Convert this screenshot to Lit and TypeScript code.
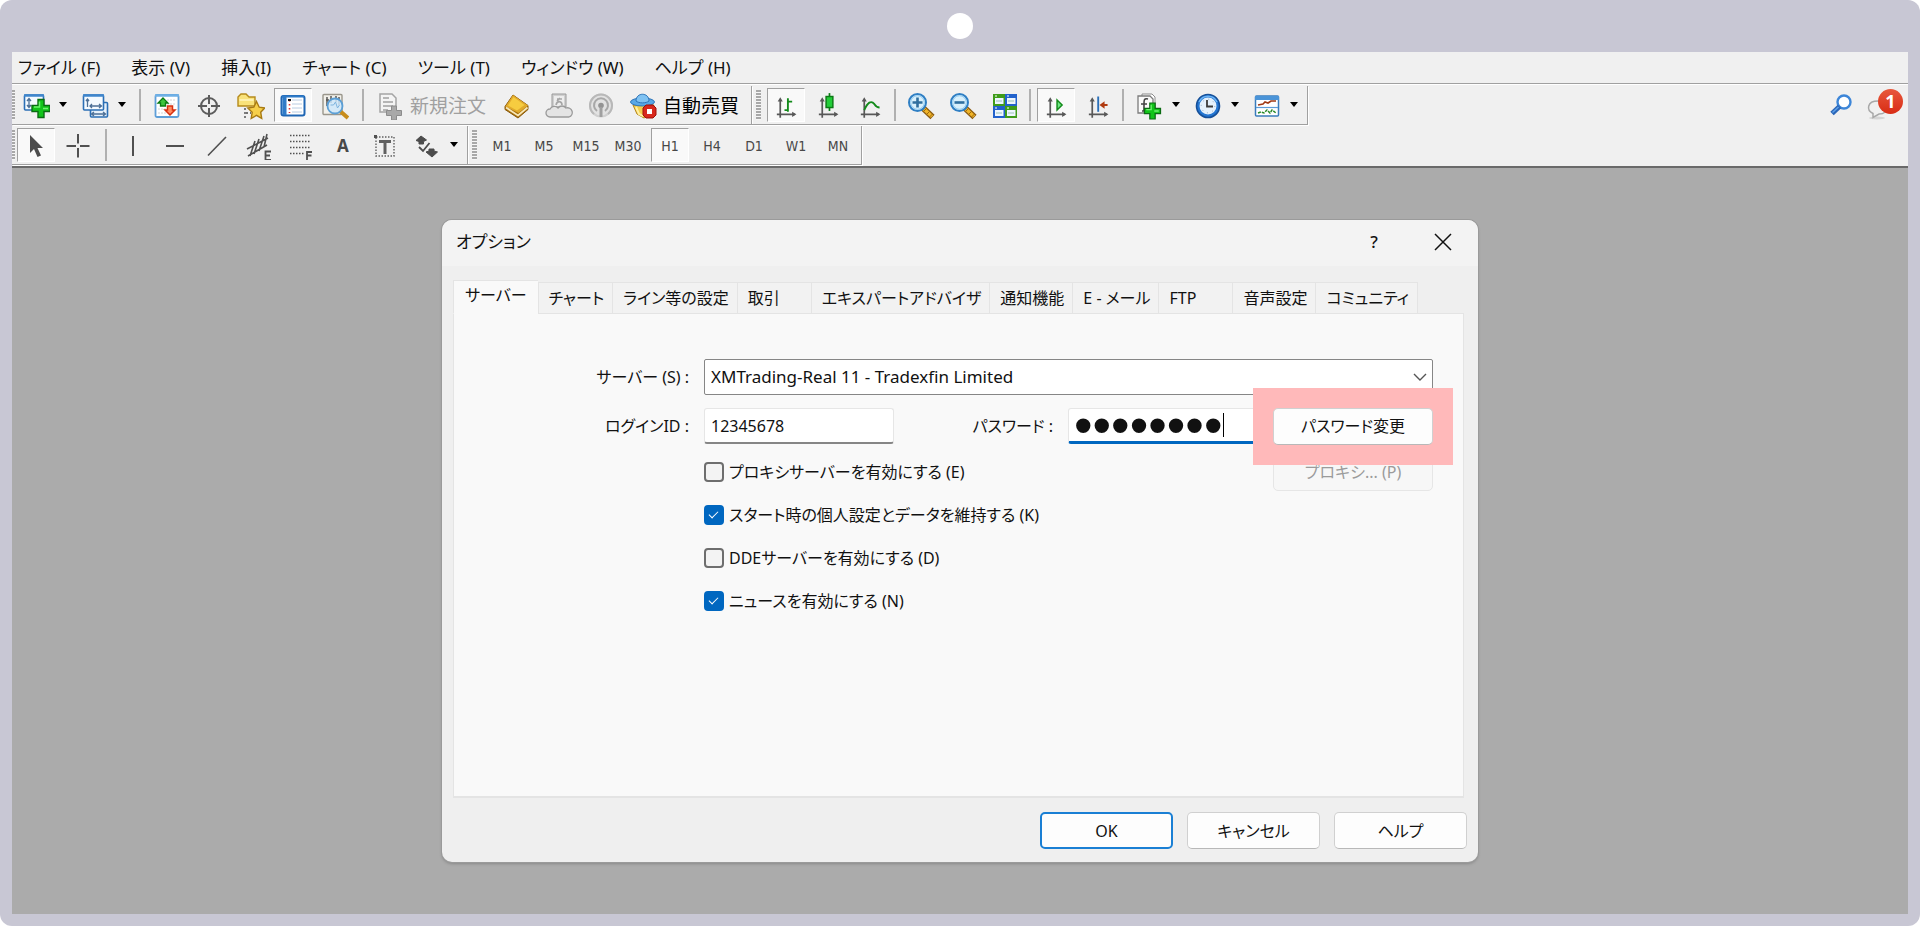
import { LitElement, html, css, svg, nothing, SVGTemplateResult } from "lit";
import { customElement, property } from "lit/decorators.js";

const plus = (x: number, y: number, s = 9) => svg`
  <path transform="translate(${x} ${y}) scale(${s / 9})" d="M-3-9h6v6h6v6h-6v6h-6v-6h-6v-6h6z" fill="#12c41a" stroke="#0a6b12" stroke-width="1.4"/>
  <path transform="translate(${x} ${y}) scale(${s / 9})" d="M-1.5-7v5.5h-5.5M2 0h5" fill="none" stroke="#6df26f" stroke-width="1.5"/>`;

const plot = (mark: SVGTemplateResult) => svg`<g transform="translate(4 4.5) scale(.85)">
  <path d="M5 4v21M1 21h21" stroke="#585858" stroke-width="2" fill="none"/>
  <path d="M5 1l3 5h-6zM24 21l-5-3v6z" fill="#585858"/>${mark}</g>`;

const glass = (sign: SVGTemplateResult) => svg`
  <path d="M16.500 16.500l9 8.500" stroke="#8a5a10" stroke-width="6"/>
  <path d="M17 17l8 7.500" stroke="#f0b428" stroke-width="3.600"/>
  <path d="M19.500 16.500l-3 3M22.500 19.500l-3 3M25.500 22l-3 3" stroke="#a06c10" stroke-width="1"/>
  <circle cx="10.500" cy="10.500" r="8.500" fill="#d9f0fc" stroke="#2f7fc4" stroke-width="2"/>
  <circle cx="10.500" cy="10.500" r="6.800" fill="none" stroke="#8fcaf0" stroke-width="1"/>${sign}`;

const ICONS: Record<string, SVGTemplateResult> = {
  newChart: svg`<rect x="2.500" y="3" width="19" height="15" rx="1" fill="#f4faff" stroke="#2b6fb5" stroke-width="1.600"/>
    <path d="M2 3.500h20" stroke="#3f86cc" stroke-width="2.500"/>
    <path d="M7 7v8M5 9l2-2.500 2 2.500M5 13l2 2.500 2-2.500M11 14h4" stroke="#4c6f96" stroke-width="1.300" fill="none"/>${plus(19, 16.5)}`,
  profiles: svg`<rect x="9.500" y="10.500" width="17" height="14.500" rx="1" fill="#e6f1fb" stroke="#2b6fb5" stroke-width="1.600"/>
    <path d="M11 22h13M13 20l-2.500 2 2.500 2M22 20l2.500 2-2.500 2" stroke="#4c6f96" stroke-width="1.300" fill="none"/>
    <rect x="2.500" y="3" width="20" height="15" rx="1" fill="#f4faff" stroke="#2b6fb5" stroke-width="1.600"/>
    <path d="M2 3.500h21" stroke="#3f86cc" stroke-width="2.500"/>
    <path d="M6.500 7v8M5 9l1.500-2L8 9M9 14h11M18 12l2.500 2-2.500 2M11 12l-2 2 2 2" stroke="#4c6f96" stroke-width="1.300" fill="none"/>`,
  marketWatch: svg`<rect x="2.500" y="3" width="23" height="22" rx="1.500" fill="#fff" stroke="#5f9fd8" stroke-width="1.800"/>
    <path d="M2 3.500h24" stroke="#6fb0e6" stroke-width="2.500"/>
    <path d="M14 8h9M14 12h9M5 17h8M5 21h8" stroke="#d4d4d4" stroke-dasharray="2 1"/>
    <path d="M10 6l5 5h-2.500v3h-5v-3H5z" fill="#3cc43c" stroke="#0a7a14" stroke-width="1.300"/>
    <path d="M17 23l-5-5h2.500v-4h5v4H22z" fill="#ff8a60" stroke="#d83010" stroke-width="1.500"/>`,
  target: svg`<circle cx="14" cy="14" r="8" fill="none" stroke="#5c5c5c" stroke-width="2"/>
    <path d="M14 3v9M14 16v9M3 14h9M16 14h9" stroke="#5c5c5c" stroke-width="2"/>`,
  navigator: svg`<path d="M1 5l3-3h5l3 3h6v9H1z" fill="#f9e27a" stroke="#b58a1c" stroke-width="1.400"/>
    <path d="M2.500 8h14" stroke="#fff6c0" stroke-width="1.500"/>
    <path d="M8 16v10M9 21h5" stroke="#4a4a4a" stroke-width="1.400" stroke-dasharray="2 2" fill="none"/>
    <path d="M19.500 9.500l2.700 5.700 5.500.8-4 4.200 1 6.200-5.200-3-5.300 3 1-6.200-4.400-4.200 6-.8z" fill="#f6cf4a" stroke="#a87a12" stroke-width="1.400"/>`,
  dataWindow: svg`<rect x="2.500" y="4" width="23" height="19.500" rx="2" fill="#fff" stroke="#1f66b4" stroke-width="2"/>
    <path d="M3 4.500h22" stroke="#2f7bc8" stroke-width="2"/>
    <rect x="3.500" y="5" width="4" height="18" fill="#2f7bc8"/>
    <path d="M10.500 8v13" stroke="#d33" stroke-width="1.600" stroke-dasharray="1.600 2.400"/>
    <path d="M13 8h10M13 12h10M13 16h10M13 20h10" stroke="#b8cce2" stroke-width="1"/>
    <path d="M9 8h3" stroke="#111" stroke-width="2"/>`,
  tester: svg`<rect x="2" y="2.500" width="19" height="20" rx="1" fill="#f2f0ea" stroke="#9a968c" stroke-width="1.400"/>
    <path d="M6 5v9M5 8h3M10 4v7M15 4v6M15 7h3M18 5v8" stroke="#555" stroke-width="1.500"/>
    <path d="M19 19l8 7" stroke="#c78c1c" stroke-width="4"/>
    <circle cx="14" cy="14" r="7.500" fill="#cfe8fa" fill-opacity=".85" stroke="#5b9fd6" stroke-width="1.800"/>
    <path d="M9.500 13h3l2-3 2 6 2-3" stroke="#7fb4de" fill="none"/>`,
  newOrder: svg`<path d="M4 2h12l4 4v14H4z" fill="#f4f4f4" stroke="#a4a4a4" stroke-width="1.500"/>
    <path d="M7 6h6M7 10h10M7 14h10M7 18h5" stroke="#a0a0a0" stroke-width="1.500"/>
    <path d="M15.500 14h5v4.500h5v5h-5V28h-5v-4.500h-5v-5h5z" fill="#a9a9a9" stroke="#8c8c8c"/>`,
  book: svg`<path d="M10 3l15 10.500v4L15 26 2 17.500v-3z" fill="#a8700c" stroke="#8a5a0a"/>
    <path d="M10 3l15 10.500L15.500 21 2.500 14.500z" fill="#e0aa2c"/>
    <path d="M10.500 5l11 8-7.500 5.500-9-5z" fill="#f6cc40"/>
    <path d="M3 15.500l12 8 9.500-8" fill="none" stroke="#f8e8b8" stroke-width="1.800"/>`,
  signalsBox: svg`<path d="M7 2h14v13H7z" fill="#d0d0d0" stroke="#9a9a9a"/>
    <path d="M9 4h10v10H9z" fill="#ededed"/><path d="M11 13c1-5 6-4 6 0M12 7h5M12 9l3-3" stroke="#a5a5a5" fill="none" stroke-width="1.600"/>
    <path d="M5 25a4 4 0 010-8 5 5 0 018-1 5 5 0 018 0 4.500 4.500 0 013 9z" fill="#e4e4e4" stroke="#9a9a9a" stroke-width="1.300"/>`,
  signals: svg`<circle cx="14" cy="13.500" r="11" fill="#e2e2e2" stroke="#d0d0d0" stroke-width="2"/>
    <path d="M7 22a11 11 0 1114 0" fill="none" stroke="#b8b8b8" stroke-width="2"/>
    <path d="M10 19a7 7 0 118 0" fill="none" stroke="#a8a8a8" stroke-width="2"/>
    <circle cx="14" cy="13.500" r="2.800" fill="#949494"/><path d="M14 15v10" stroke="#a0a0a0" stroke-width="3"/>`,
  expert: svg`<path d="M4 13h21l-3 9-7 4-7-4z" fill="#f3cf4e" stroke="#b4841a"/>
    <path d="M7 15l3 7 4 2" stroke="#fff0a0" stroke-width="2" fill="none"/>
    <ellipse cx="13.500" cy="10" rx="12" ry="4" fill="#58a8e6" stroke="#2d74b8"/>
    <path d="M7 9c0-9 13-9 13 0-3 2.500-10 2.500-13 0z" fill="#7fc2f2" stroke="#2d74b8"/>
    <path d="M17 13h7l3 3v7l-3 3h-7l-3-3v-7z" fill="#d8281c" stroke="#a01008"/><rect x="18" y="17" width="5" height="5" fill="#fff"/>`,
  bars: plot(svg`<path d="M14 2v16M14 6h5M10 16h4" stroke="#128a1a" stroke-width="2.200" fill="none"/>`),
  candles: plot(svg`<path d="M13.500-4v21" stroke="#0a7a14" stroke-width="2"/><rect x="9.500" y="0" width="8" height="13" fill="#22cc38" stroke="#0a7a14" stroke-width="1.700"/>`),
  line: plot(svg`<path d="M5 16c4-9 8-12 12-7 2 3 4 4 6 4" stroke="#128a1a" stroke-width="2.200" fill="none"/>`),
  zoomIn: glass(svg`<path d="M5.500 10.500h10M10.500 5.500v10" stroke="#2f6f9f" stroke-width="2.600"/>`),
  zoomOut: glass(svg`<path d="M5.500 10.500h10" stroke="#2f6f9f" stroke-width="2.600"/>`),
  tile: svg`<rect x="2" y="2" width="12" height="12" fill="#3f9c1a"/><rect x="14" y="2" width="12" height="12" fill="#2262cc"/>
    <rect x="2" y="14" width="12" height="12" fill="#2262cc"/><rect x="14" y="14" width="12" height="12" fill="#3f9c1a"/>
    ${[[2, 2], [14, 2], [2, 14], [14, 14]].map(([x, y]) => svg`<rect x=${x + 2} y=${y + 4} width="8.500" height="6" fill="#eef6ff"/>
      <path d="M${x + 3} ${y + 7}h6" stroke="#9cc4b8" stroke-width="1"/><path d="M${x + 2} ${y + 2}h2" stroke="#fff" stroke-width="1"/>`)}`,
  autoScroll: plot(svg`<path d="M13 4l6 6-6 6z" fill="#6ee884" stroke="#128a1a" stroke-width="1.700"/>`),
  shift: plot(svg`<path d="M12 0v18" stroke="#2a6fb8" stroke-width="2.200"/><path d="M23 10h-5" stroke="#b03a10" stroke-width="2.400"/><path d="M13.500 10l6-4.500v9z" fill="#b03a10"/>`),
  indicators: svg`<path d="M7 2h10l3 3v14H7z" fill="#fff" stroke="#8c8c8c"/><path d="M3 4h12l3 3v14H3z" fill="#fafafa" stroke="#7c7c7c" stroke-width="1.300"/>
    <path d="M13 7c-4-1-4 1-4 5v7H7M6 12h6" stroke="#444" stroke-width="1.600" fill="none"/>${plus(17.5, 19, 8)}`,
  clock: svg`<circle cx="14" cy="14" r="11.500" fill="#2476d2" stroke="#154f98" stroke-width="1.600"/>
    <path d="M5 10a10 10 0 0118 0" stroke="#6cb4f4" stroke-width="1.500" fill="none"/>
    <circle cx="14" cy="14" r="8.500" fill="#e4f0fb"/><path d="M13 8v6.500h6" stroke="#3a3a3a" stroke-width="1.800" fill="none"/>
    <circle cx="14" cy="14" r="6.800" fill="none" stroke="#90a8c0" stroke-dasharray="1 4.340"/>`,
  templates: svg`<rect x="2.500" y="4" width="23" height="20" rx="1" fill="#fff" stroke="#3a7cbc" stroke-width="1.500"/>
    <path d="M2 6h24" stroke="#4a94d8" stroke-width="4"/><path d="M3 15.500h22" stroke="#5a9cd8" stroke-width="1.200"/>
    <path d="M5 13l5-1 2-2 3 1 3-2h5" stroke="#a03a14" stroke-width="1.600" fill="none"/>
    <path d="M5 21l3-1 3 1 3-3 3 3 2-3 4 3" stroke="#2a8a2a" stroke-width="1.500" fill="none" stroke-dasharray="3 1"/>`,
  cursor: svg`<path d="M8 3v18l4-4 3.500 8 3.500-1.500L15.500 16H21z" fill="#4c4c4c"/>`,
  cross: svg`<path d="M14 2v9.500M14 16v9.500M2.500 14h9.500M16 14h9.500" stroke="#505050" stroke-width="2"/>`,
  vline: svg`<path d="M14 4v20" stroke="#505050" stroke-width="2"/>`,
  hline: svg`<path d="M5 14h18" stroke="#505050" stroke-width="2"/>`,
  trend: svg`<path d="M5 23.500L23 5" stroke="#505050" stroke-width="1.600"/>`,
  channel: svg`<path d="M2 17L23 6M3 24L22 13M10 9L5 24M14 7L9 22M19 4l-5 15M22 2l-3 13" stroke="#505050" stroke-width="1.600" fill="none"/>
    <path d="M26 19.500h-5.500V28H26M20.500 23.500H25" stroke="#505050" stroke-width="1.800" fill="none"/>`,
  fibo: svg`<path d="M3 3.500h21M3 9.500h21M3 15.500h21M3 21.500h14" stroke="#505050" stroke-width="1.500" stroke-dasharray="1.500 1.500"/>
    <path d="M25 20h-5v8M20 23.500h4.500" stroke="#505050" stroke-width="1.800" fill="none"/>`,
  label: svg`<rect x="5" y="5" width="18" height="19" fill="none" stroke="#606060" stroke-width="1.400" stroke-dasharray="1.500 1.500"/>
    <rect x="3" y="3" width="3" height="3" fill="#505050"/><path d="M8 9.500h12M14 10v12" stroke="#606060" stroke-width="3"/>`,
  arrows: svg`<path d="M8 4l5.500 4-3 1.500V12H6V9.500L3 8.500zM19 25l-6-5 3-1v-2h5v2l3.500 1z" fill="#4c4c4c" stroke="#4c4c4c"/>
    <path d="M6 15l4 4 6.500-8" stroke="#4c4c4c" stroke-width="1.800" fill="none"/>`,
  search: svg`<circle cx="17" cy="10" r="6.500" fill="#fff" stroke="#3d86d8" stroke-width="2.400"/><path d="M12.500 14.500l-7.500 7" stroke="#2a66b8" stroke-width="5"/><path d="M11.500 15l-6 5.500" stroke="#5fa0e8" stroke-width="1.500"/>`,
  bubble: svg`<ellipse cx="12" cy="26" rx="8" ry="1.500" fill="#d4d4d4"/><path d="M13 9c12 0 12 13 1 13l-6 3.500v-4C1 18 2 9 13 9z" fill="#f0f0f0" stroke="#a8a8a8" stroke-width="1.500"/>`,
};

const icon = (name: string) =>
  html`<svg class="ico" viewBox="0 0 28 28" width="28" height="28" aria-hidden="true">${ICONS[name]}</svg>`;

interface Tool {
  icon?: string;
  text?: string;
  label?: string;
  menu?: boolean;
  on?: boolean;
  off?: boolean;
  sep?: boolean;
}

const SEP: Tool = { sep: true };

const STANDARD: Tool[] = [
  { icon: "newChart", label: "新規チャート", menu: true },
  { icon: "profiles", label: "プロファイル", menu: true },
  SEP,
  { icon: "marketWatch", label: "気配値" },
  { icon: "target", label: "データウィンドウ" },
  { icon: "navigator", label: "ナビゲーター" },
  { icon: "dataWindow", label: "ターミナル", on: true },
  { icon: "tester", label: "ストラテジーテスター" },
  SEP,
  { icon: "newOrder", text: "新規注文", off: true },
  { icon: "book", label: "MetaEditor" },
  { icon: "signalsBox", label: "VPS" },
  { icon: "signals", label: "シグナル" },
  { icon: "expert", text: "自動売買" },
];

const CHARTS: Tool[] = [
  { icon: "bars", label: "バーチャート", on: true },
  { icon: "candles", label: "ローソク足" },
  { icon: "line", label: "ラインチャート" },
  SEP,
  { icon: "zoomIn", label: "拡大" },
  { icon: "zoomOut", label: "縮小" },
  { icon: "tile", label: "整列" },
  SEP,
  { icon: "autoScroll", label: "自動スクロール", on: true },
  { icon: "shift", label: "チャートシフト" },
  SEP,
  { icon: "indicators", label: "インディケータ", menu: true },
  { icon: "clock", label: "時間軸", menu: true },
  { icon: "templates", label: "定型チャート", menu: true },
];

const LINES: Tool[] = [
  { icon: "cursor", label: "カーソル", on: true },
  { icon: "cross", label: "クロスヘア" },
  SEP,
  { icon: "vline", label: "垂直線" },
  { icon: "hline", label: "水平線" },
  { icon: "trend", label: "トレンドライン" },
  { icon: "channel", label: "チャネル" },
  { icon: "fibo", label: "フィボナッチ" },
  { text: "A", label: "テキスト" },
  { icon: "label", label: "テキストラベル" },
  { icon: "arrows", label: "矢印", menu: true },
];

const PERIODS: Tool[] = ["M1", "M5", "M15", "M30", "H1", "H4", "D1", "W1", "MN"].map((text) => ({
  text,
  label: text,
  on: text === "H1",
}));

@customElement("tool-bar")
export class ToolBar extends LitElement {
  @property({ attribute: false }) items: Tool[] = [];

  static styles = css`
    :host {
      display: flex;
      align-items: center;
      height: 38px;
      border-right: 1px solid #a0a0a0;
      border-bottom: 1px solid #a0a0a0;
      box-shadow: 1px 1px 0 #fff;
      padding-right: 2px;
      font-family: "Noto Sans", "Noto Sans CJK JP", sans-serif;
    }
    .grip {
      width: 5px;
      height: 30px;
      flex: none;
      margin: 0 4px;
      background: repeating-linear-gradient(#a8a8a8 0 2px, #f6f6f6 2px 3px);
    }
    :host([docked]) .grip {
      width: 3px;
      margin: 0;
    }
    .sep {
      width: 2px;
      height: 32px;
      margin: 0 4px 0 3px;
      background: #b0b0b0;
    }
    :host([docked]) .sep {
      margin: 0 5px 0 6px;
    }
    button {
      display: flex;
      align-items: center;
      height: 34px;
      margin: 0 2px;
      padding: 0;
      border: 1px solid transparent;
      background: none;
      color: #000;
      font: 19px/32px "Noto Sans CJK JP", sans-serif;
    }
    button:disabled {
      color: #a0a0a0;
    }
    .cell {
      display: flex;
      justify-content: center;
      width: 36px;
      padding-top: 2px;
    }
    .mark {
      font: 14px/30px "DejaVu Sans Condensed", "DejaVu Sans", sans-serif;
      color: #484848;
    }
    .big {
      font: bold 17px/30px "Noto Sans", sans-serif;
    }
    .on {
      border-color: #a0a0a0 #fff #fff #a0a0a0;
      background: #f9f9f9;
    }
    .caption {
      padding: 0 7px 0 2px;
    }
    .drop {
      width: 12px;
      margin: 0 2px 0 3px;
    }
  `;

  render() {
    return html`<span class="grip"></span>${this.items.map((t) =>
        t.sep
          ? html`<span class="sep"></span>`
          : html`<button class=${t.on ? "on" : ""} aria-label=${t.label ?? t.text ?? ""} ?disabled=${t.off}>
              <span class="cell ${t.icon ? "" : "mark"} ${t.text === "A" ? "big" : ""}">${t.icon ? icon(t.icon) : t.text}</span>
              ${t.icon && t.text ? html`<span class="caption">${t.text}</span>` : nothing}
              ${t.menu
                ? html`<svg class="drop" viewBox="0 0 12 6" height="6" aria-hidden="true"><path d="M2 0h8l-4 5z" fill="#000" /></svg>`
                : nothing}
            </button>`
      )}`;
  }
}

const TABS = ["サーバー", "チャート", "ライン等の設定", "取引", "エキスパートアドバイザ", "通知機能", "E - メール", "FTP", "音声設定", "コミュニティ"];

const CHECKS = [
  { id: "proxy", text: "プロキシサーバーを有効にする (E)", on: false },
  { id: "keep", text: "スタート時の個人設定とデータを維持する (K)", on: true },
  { id: "dde", text: "DDEサーバーを有効にする (D)", on: false },
  { id: "news", text: "ニュースを有効にする (N)", on: true },
];

@customElement("options-dialog")
export class OptionsDialog extends LitElement {
  static styles = css`
    :host {
      display: block;
      width: 1036px;
      max-width: 96%;
      box-sizing: border-box;
      border-radius: 10px;
      overflow: hidden;
      background: #efefef;
      box-shadow: 0 0 0 1px #9a9a9a, 0 2px 3px #888;
      color: #111;
      font: 16px/24px "Noto Sans", "Noto Sans CJK JP", sans-serif;
      font-feature-settings: "palt";
    }
    button,
    input,
    select {
      font: inherit;
      font-feature-settings: inherit;
      color: inherit;
      box-sizing: border-box;
      margin: 0;
    }
    header {
      display: flex;
      align-items: center;
      height: 44px;
      padding: 0 8px 0 14px;
      border-bottom: 2px solid #f3f3f3;
      background: #f3f3f3;
    }
    h1 {
      flex: 1;
      margin: 0;
      font: inherit;
      font-size: 17px;
    }
    .sys {
      display: flex;
      justify-content: center;
      width: 54px;
      padding: 0;
      margin-left: 15px;
      border: 0;
      background: none;
      font-size: 17px;
      font-weight: 500;
    }
    .tabs {
      display: flex;
      align-items: flex-end;
      height: 34px;
      margin: 14px 11px -1px;
      position: relative;
    }
    .tab {
      height: 32px;
      min-width: 74px;
      padding: 0 8px 0 10px;
      border: 1px solid #e4e4e4;
      border-right-width: 0;
      background: #f2f2f2;
      text-align: left;
      white-space: nowrap;
    }
    .tab:last-child {
      border-right-width: 1px;
    }
    .current {
      height: 34px;
      padding: 0 11px 5px;
      border-bottom-color: #f9f9f9;
      background: #f9f9f9;
    }
    .panel {
      display: grid;
      grid-template-columns: 235px 190px 1fr 190px 160px;
      grid-template-rows: 42px 42px;
      grid-auto-rows: 36px;
      align-content: start;
      align-items: center;
      gap: 7px 15px;
      min-height: 440px;
      margin: 0 14px 0 11px;
      padding: 42px 30px 0 0;
      border: 1px solid #e4e4e4;
      border-bottom-width: 2px;
      background: #f9f9f9;
    }
    .panel > label {
      justify-self: end;
    }
    .combo {
      grid-column: 2 / -1;
      display: grid;
      align-items: center;
    }
    .combo > * {
      grid-area: 1 / 1;
    }
    select {
      appearance: none;
      width: 100%;
      height: 36px;
      padding: 0 6px;
      border: 1px solid #868686;
      border-radius: 2px;
      background: #fff;
      font-size: 17px;
    }
    .chev {
      justify-self: end;
      margin-right: 6px;
    }
    .field {
      height: 36px;
      padding: 0 6px;
      border: 1px solid #e6e6e6;
      border-bottom: 2px solid #868686;
      border-radius: 3px;
      background: #fff;
    }
    .secret {
      display: flex;
      align-items: center;
      padding: 0 5px;
      border-bottom: 3px solid #0067c0;
      box-sizing: border-box;
    }
    .secret input {
      width: 149px;
      height: 30px;
      padding: 0;
      border: 0;
      outline: 0;
      background: none;
      font: 53px/30px "Liberation Sans", sans-serif;
    }
    .caret {
      width: 1px;
      height: 24px;
      background: #000;
    }
    .btn {
      height: 37px;
      padding: 0;
      border: 1px solid #d0d0d0;
      border-bottom-color: #b8b8b8;
      border-radius: 5px;
      background: #fdfdfd;
    }
    .btn:disabled {
      border-color: #e6e6e6;
      background: #f7f7f7;
      color: #9b9b9b;
    }
    .marked {
      position: relative;
      z-index: 1;
      display: grid;
    }
    .marked::before {
      content: "";
      position: absolute;
      inset: -20px;
      background: #ffb9ba;
    }
    .marked .btn {
      position: relative;
    }
    .check {
      grid-column: 2 / span 3;
      display: flex;
      align-items: center;
      gap: 5px;
    }
    .box {
      appearance: none;
      display: grid;
      width: 20px;
      height: 20px;
      border: 2px solid #6e6e6e;
      border-radius: 4px;
      background: #f3f3f3;
    }
    .box:checked {
      border-color: #0067c0;
      background: #0067c0;
    }
    .box:checked::before {
      content: "";
      width: 8px;
      height: 4px;
      margin: 4px 0 0 3px;
      border: solid #fff;
      border-width: 0 0 1px 1px;
      transform: rotate(-45deg);
    }
    footer {
      display: flex;
      justify-content: flex-end;
      gap: 14px;
      padding: 14px 11px 13px;
    }
    footer .btn {
      width: 133px;
    }
    footer .default {
      border: 2px solid #1a7fd4;
    }
  `;

  render() {
    return html`
      <header>
        <h1>オプション</h1>
        <button class="sys" aria-label="ヘルプ">?</button>
        <button class="sys" aria-label="閉じる">
          <svg width="18" height="18" viewBox="0 0 18 18"><path d="M1 1l16 16M17 1L1 17" stroke="#111" stroke-width="1.500" /></svg>
        </button>
      </header>
      <div class="tabs" role="tablist">
        ${TABS.map((t, i) => html`<button class="tab ${i ? "" : "current"}" role="tab" aria-selected=${i ? "false" : "true"}>${t}</button>`)}
      </div>
      <div class="panel" role="tabpanel">
        <label for="server">サーバー (S) :</label>
        <div class="combo">
          <select id="server"><option>XMTrading-Real 11 - Tradexfin Limited</option></select>
          <svg class="chev" width="14" height="8" viewBox="0 0 14 8" aria-hidden="true"><path d="M1 1l6 6 6-6" fill="none" stroke="#555" stroke-width="1.400" /></svg>
        </div>
        <label for="login">ログインID :</label>
        <input id="login" class="field" type="text" value="12345678" />
        <label for="pass">パスワード :</label>
        <div class="field secret"><input id="pass" type="password" value="password" /><span class="caret"></span></div>
        <div class="marked"><button class="btn">パスワード変更</button></div>
        ${CHECKS.map(
          (c, i) => html`<div class="check">
              <input class="box" type="checkbox" id=${c.id} .checked=${c.on} /><label for=${c.id}>${c.text}</label>
            </div>
            ${i ? nothing : html`<button class="btn" disabled>プロキシ... (P)</button>`}`
        )}
      </div>
      <footer>
        <button class="btn default">OK</button>
        <button class="btn">キャンセル</button>
        <button class="btn">ヘルプ</button>
      </footer>
    `;
  }
}

const MENU = ["ファイル (F)", "表示 (V)", "挿入(I)", "チャート (C)", "ツール (T)", "ウィンドウ (W)", "ヘルプ (H)"];

@customElement("app-root")
export class AppRoot extends LitElement {
  static styles = css`
    :host {
      display: flex;
      flex-direction: column;
      box-sizing: border-box;
      min-height: 100vh;
      padding: 0 12px 12px;
      border-radius: 12px;
      background: #c8c7d4;
      font: 17px/24px "Noto Sans", "Noto Sans CJK JP", sans-serif;
    }
    .bezel {
      display: flex;
      align-items: center;
      justify-content: center;
      height: 52px;
    }
    .dot {
      width: 26px;
      height: 26px;
      border-radius: 50%;
      background: #fff;
    }
    .app {
      flex: 1;
      display: flex;
      flex-direction: column;
      background: #f0f0f0;
    }
    nav {
      display: flex;
      align-items: center;
      gap: 31px;
      height: 31px;
      padding: 0 6px;
      border-bottom: 1px solid #a0a0a0;
      box-shadow: 0 1px 0 #fff;
      margin-bottom: 2px;
      font-feature-settings: "palt";
    }
    nav a {
      color: #111;
      text-decoration: none;
      white-space: nowrap;
    }
    .row {
      display: flex;
      margin-bottom: 1px;
    }
    .extras {
      display: flex;
      align-items: center;
      gap: 10px;
      margin-left: auto;
      padding-right: 3px;
    }
    .extras button {
      position: relative;
      display: flex;
      padding: 0;
      border: 0;
      background: none;
    }
    .badge {
      position: absolute;
      right: 2px;
      top: -3px;
      width: 25px;
      height: 25px;
      border-radius: 50%;
      background: linear-gradient(#e8583c, #d82c14);
      color: #fff;
      font: bold 18px/25px "Noto Sans", sans-serif;
      text-align: center;
    }
    .desk {
      flex: 1;
      display: flex;
      align-items: center;
      justify-content: center;
      border-top: 2px solid #696969;
      background: #ababab;
    }
  `;

  render() {
    return html`
      <div class="bezel"><span class="dot"></span></div>
      <div class="app">
        <nav>${MENU.map((m) => html`<a href="#">${m}</a>`)}</nav>
        <div class="row">
          <tool-bar docked .items=${STANDARD}></tool-bar>
          <tool-bar .items=${CHARTS}></tool-bar>
          <div class="extras">
            <button aria-label="検索">${icon("search")}</button>
            <button aria-label="通知">
              <svg width="40" height="28" viewBox="0 0 40 28" aria-hidden="true">${ICONS.bubble}</svg><span class="badge">1</span>
            </button>
          </div>
        </div>
        <div class="row">
          <tool-bar docked .items=${LINES}></tool-bar>
          <tool-bar .items=${PERIODS}></tool-bar>
        </div>
        <main class="desk"><options-dialog></options-dialog></main>
      </div>
    `;
  }
}
